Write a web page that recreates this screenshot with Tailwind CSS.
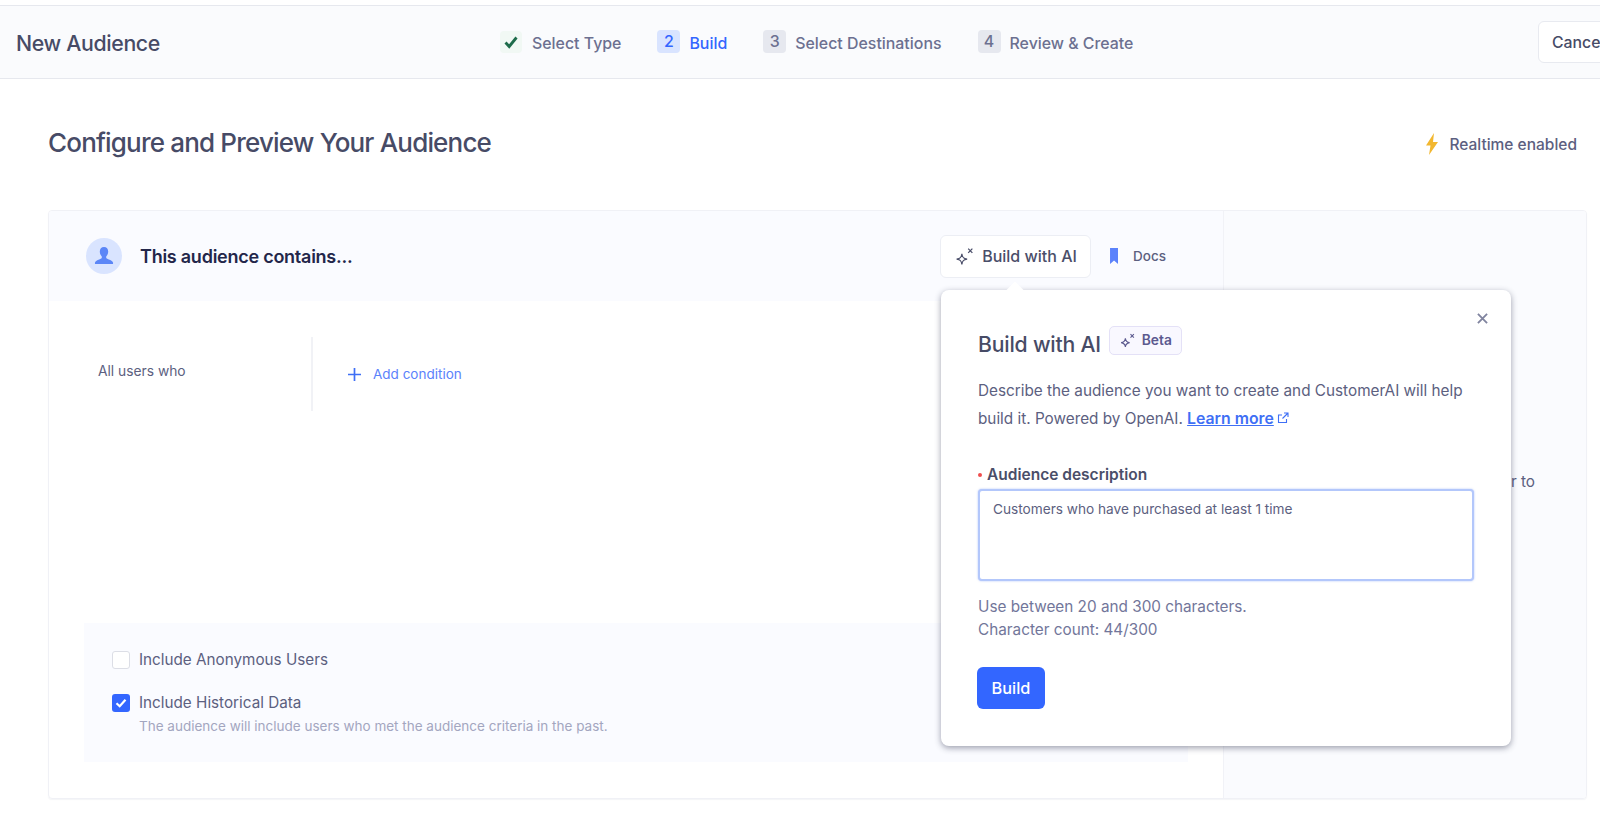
<!DOCTYPE html>
<html lang="en">
<head>
<meta charset="utf-8">
<title>New Audience</title>
<script src="https://cdn.jsdelivr.net/npm/@tailwindcss/browser@4"></script>
</head>
<body class="m-0 bg-white">
<div class="relative w-[1600px] h-[828px] overflow-hidden bg-white font-['Inter',sans-serif] text-[#4a4e69]">
  <header class="mt-[5px] h-[74px] flex items-center pl-4 bg-[#fafbfd] border-y border-[#e6e8ee]">
    <h1 class="w-[484px] shrink-0 pt-[3px] text-[21.300px] font-medium tracking-[-0.35px] text-[#474b66]">New Audience</h1>
    <ol class="flex items-center text-[15.900px] font-medium text-[#6c7090]">
      <li class="flex items-center gap-[10px] mr-[36px]">
        <span class="w-[22px] h-[22px] rounded bg-[#f1f8f4] flex items-center justify-center">
          <svg class="w-[14px] h-[14px]" viewBox="0 0 14 14" fill="none" stroke="#1d6b4a" stroke-width="2.800"><path d="M1.500 7.500 5.200 11.500 12.500 2.500"/></svg>
        </span><span class="pt-[3px]">Select Type</span>
      </li>
      <li class="flex items-center gap-[9px] mr-[36px] text-[#3366ff]">
        <span class="w-[23px] h-[23px] rounded bg-[#d9e4ff] flex items-center justify-center">2</span><span class="pt-[3px]">Build</span>
      </li>
      <li class="flex items-center gap-[9px] mr-[36px]">
        <span class="w-[23px] h-[23px] rounded bg-[#e6e8ef] flex items-center justify-center">3</span><span class="pt-[3px]">Select Destinations</span>
      </li>
      <li class="flex items-center gap-[9px]">
        <span class="w-[23px] h-[23px] rounded bg-[#e6e8ef] flex items-center justify-center">4</span><span class="pt-[3px]">Review &amp; Create</span>
      </li>
    </ol>
    <button class="ml-auto mr-[-26px] shrink-0 w-[88px] h-[42px] pl-[13px] pt-[2px] text-left bg-white border border-[#e8eaf0] rounded-md text-[15.800px] font-medium text-[#474b66]">Cancel</button>
  </header>

  <main class="pl-12 pr-[13px] pt-[47px]">
    <div class="h-8 mb-[52px] flex items-center justify-between pr-[10px]">
      <h2 class="text-[26px] font-medium tracking-[-0.82px] text-[#474b66]">Configure and Preview Your Audience</h2>
      <div class="flex items-center gap-[11px] pt-[3px] text-[15.500px] font-medium text-[#5c6080]">
        <svg class="w-[12px] h-[22px]" viewBox="0 0 12 22" fill="#f2b730"><path d="M8 0 0 12.500h4.500L3 22l9-13H7z"/></svg>
        <span class="pt-[2px]">Realtime enabled</span>
      </div>
    </div>

    <section class="h-[589px] flex border border-[#f0f1f6] rounded shadow-[0_1px_1px_rgba(70,80,120,0.06)] overflow-hidden">
      <div class="w-[1175px] shrink-0 flex flex-col border-r border-[#f1f2f7]">
        <div class="h-[90px] shrink-0 flex items-center pl-[37px] pr-[20px] bg-[#fafbff]">
          <span class="w-9 h-9 rounded-full bg-[#d9e4ff] flex items-center justify-center">
            <svg class="w-[20px] h-[20px]" viewBox="0 0 20 20" fill="#5b86f7"><path d="M10 1c2.700 0 4.200 2 4.200 4.600 0 2-.8 3.800-2 4.800v1.400c0 .6 1 1 2.600 1.600 2 .7 3.700 1.400 4.200 3.100.2.800 0 1.500-.1 1.500H1.100c-.1 0-.3-.7-.1-1.500.5-1.700 2.200-2.400 4.200-3.100 1.600-.6 2.600-1 2.600-1.600v-1.400c-1.200-1-2-2.800-2-4.800C5.800 3 7.300 1 10 1z"/></svg>
          </span>
          <h3 class="ml-[18px] text-[18px] font-semibold tracking-[-0.25px] text-[#23264a]">This audience contains...</h3>
          <button class="ml-auto w-[151px] h-[43px] flex items-center justify-center gap-[7px] bg-white border border-[#eceef4] rounded-md text-[16px] font-medium text-[#4a4e69]">
            <svg class="w-[21px] h-[21px]" viewBox="0 0 20 20" fill="none" stroke="#4a4e69" stroke-width="1.200"><path d="M7.500 7.500C7.900 11 9 12.100 12.500 12.500 9 12.900 7.900 14 7.500 17.500 7.100 14 6 12.900 2.500 12.500 6 12.100 7.100 11 7.500 7.500z"/><path d="M13.500 2.500l4 4M17.500 2.500l-4 4"/></svg>
            Build with AI
          </button>
          <span class="ml-[19px] w-[8px] h-[16px] bg-[#5b82fb] [clip-path:polygon(0_0,100%_0,100%_100%,50%_78%,0_100%)]"></span>
          <span class="ml-[15px] mr-[37px] text-[13.500px] font-medium text-[#5c6080]">Docs</span>
        </div>
        <div class="mt-[36px] h-[74px] flex">
          <div class="w-[264px] shrink-0 pl-[49px] pt-[25px] border-r-2 border-[#f1f2f6] text-[13.800px] leading-[18px] text-[#5c6080]">All users who</div>
          <div class="ml-[35px] pt-[28px] flex items-center h-[46px] gap-[12px] text-[13.500px] text-[#5b82fb]">
            <svg class="w-[13px] h-[13px]" viewBox="0 0 13 13" fill="none" stroke="#3f6ff5" stroke-width="1.700"><path d="M6.500 0v13M0 6.500h13"/></svg>
            Add condition
          </div>
        </div>
        <div class="mt-[212px] mx-[35px] h-[139px] bg-[#fafbff] pl-[28px] pt-[28px]">
          <label class="flex items-center gap-[9px] h-[18px] text-[15.250px] text-[#5c6080]">
            <span class="w-[18px] h-[18px] rounded-[3px] bg-white border border-[#dcdee6]"></span><span class="pt-[1px]">Include Anonymous Users</span>
          </label>
          <label class="mt-[25px] flex items-center gap-[9px] h-[18px] text-[15.250px] text-[#5c6080]">
            <span class="w-[18px] h-[18px] rounded-[3px] bg-[#3366ff] flex items-center justify-center">
              <svg class="w-[12px] h-[12px]" viewBox="0 0 12 12" fill="none" stroke="#fff" stroke-width="2.200"><path d="M1.500 6.300 4.700 9.300 10.500 2.800"/></svg>
            </span><span class="pt-[1px]">Include Historical Data</span>
          </label>
          <p class="mt-[5px] ml-[27px] text-[13.500px] leading-[18px] text-[#a3a6bf]">The audience will include users who met the audience criteria in the past.</p>
        </div>
      </div>
      <div class="flex-1 bg-[#fafbfe] pt-[261px] pr-[51px] flex justify-end items-start">
        <p class="text-[15.300px] leading-5 whitespace-nowrap text-[#5c6080]">Add a condition in order to</p>
      </div>
    </section>
  </main>

  <div class="absolute left-[941px] top-[290px] w-[570px] h-[456px] bg-white rounded-lg shadow-[0_2px_6px_rgba(40,44,70,0.45)] pl-[37px] pr-[37px]">
    <span class="absolute left-[68px] top-[-6px] w-3 h-3 rotate-45 bg-white"></span>
    <svg class="absolute left-[536px] top-[23px] w-[11px] h-[11px]" viewBox="0 0 12 12" fill="none" stroke="#80849f" stroke-width="2"><path d="M1 1l10 10M11 1 1 11"/></svg>
    <div class="pt-[36px] h-[69px] flex items-center">
      <h4 class="pt-[4px] text-[21.200px] font-medium tracking-[-0.2px] text-[#474b66]">Build with AI</h4>
      <span class="ml-[8px] w-[73px] h-[29px] mt-[-4px] flex items-center justify-center gap-[6px] rounded-[5px] border border-[#e4e1f7] bg-[#f9f8ff] text-[13.800px] font-semibold text-[#5c5a8f]">
        <svg class="w-[17px] h-[17px]" viewBox="0 0 20 20" fill="none" stroke="#5c5a8f" stroke-width="1.300"><path d="M7.500 7.500C7.900 11 9 12.100 12.500 12.500 9 12.900 7.900 14 7.500 17.500 7.100 14 6 12.900 2.500 12.500 6 12.100 7.100 11 7.500 7.500z"/><path d="M13.500 2.500l4 4M17.500 2.500l-4 4"/></svg>
        Beta
      </span>
    </div>
    <p class="mt-[18px] text-[15.300px] leading-[27.500px] text-[#5c6080]">Describe the audience you want to create and CustomerAI will help<br>build it. Powered by OpenAI. <a class="text-[15.800px] font-semibold text-[#3f6ff5] underline">Learn more</a><svg class="inline-block ml-[3px] mb-[3px] w-[12px] h-[12px]" viewBox="0 0 12 12" fill="none" stroke="#3f6ff5" stroke-width="1.100"><path d="M9.500 7v3.500h-8V3H5M7 1h4v4M11 1 5.500 6.500"/></svg></p>
    <label class="mt-[33px] flex items-center h-[20px] text-[15.500px] font-semibold text-[#4a4e69]">
      <span class="w-[4px] h-[4px] rounded-full bg-[#ef4d4d] mr-[5px]"></span>Audience description
    </label>
    <div class="mt-[4px] w-[496px] h-[92px] rounded border-2 border-[#b3c7fb] shadow-[0_0_2px_rgba(90,130,250,0.5)] bg-white pl-[13px] pt-[9px] text-[13.650px] leading-[18px] text-[#5c6080]">Customers who have purchased at least 1 time</div>
    <p class="mt-[15px] text-[15.300px] leading-[22.500px] text-[#72769a]">Use between 20 and 300 characters.<br>Character count: 44/300</p>
    <button class="mt-[26px] ml-[-1px] w-[68px] h-[42px] rounded-md bg-[#3366ff] text-[16.300px] font-medium text-white">Build</button>
  </div>
</div>
</body>
</html>
